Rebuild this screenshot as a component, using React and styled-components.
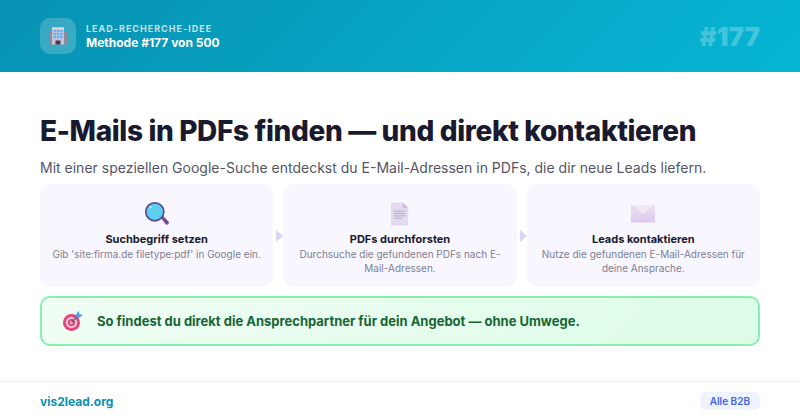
import React from 'react';
import styled, { createGlobalStyle } from 'styled-components';

const GlobalStyle = createGlobalStyle`
    html, body {
        margin: 0;
        padding: 0;
        background: #fff;
    }
    * {
        box-sizing: border-box;
    }
`;

const BuildingIcon = () => (
    <svg width="20" height="20" viewBox="0 0 20 20">
        <rect x="1" y="5" width="4" height="13.5" fill="#8d8a9c" />
        <rect x="15" y="5" width="4" height="13.5" fill="#8d8a9c" />
        <rect x="4" y="1.5" width="12" height="17" fill="#c9c3d6" />
        <rect x="4" y="1.5" width="12" height="1.5" fill="#e2deea" />
        {[4, 7, 10].map((y) => (
            <g key={y} fill="#5fb4ee">
                <rect x="5.5" y={y} width="2.4" height="2.2" />
                <rect x="8.8" y={y} width="2.4" height="2.2" />
                <rect x="12.1" y={y} width="2.4" height="2.2" />
            </g>
        ))}
        <rect x="7.5" y="14.5" width="5" height="4" fill="#3f3a52" />
    </svg>
);

const SearchIcon = () => (
    <svg width="26" height="26" viewBox="0 0 26 26">
        <path d="M16.5 16.5l2-2 6 6a1.6 1.6 0 0 1 0 2.2l-.6.6a1.6 1.6 0 0 1-2.2 0z" fill="#7c4a8c" />
        <circle cx="10.8" cy="10.8" r="9" fill="#5ccfee" stroke="#5a4a96" strokeWidth="1.7" />
        <circle cx="6.8" cy="6.2" r="1.2" fill="#a8e8f8" />
    </svg>
);

const DocumentIcon = () => (
    <svg width="19" height="24" viewBox="0 0 20 25">
        <path d="M1 .5h12.5L19 6v18.5H1z" fill="#e3daf0" />
        <path d="M13.5.5L19 6h-5.5z" fill="#c8bcd8" />
        <g stroke="#b5abc4" strokeWidth="1">
            <path d="M4 9.5h12" />
            <path d="M4 12h12" />
            <path d="M4 14.5h12" />
            <path d="M4 17h9" />
        </g>
    </svg>
);

const MailIcon = () => (
    <svg width="26" height="20" viewBox="0 0 26 20">
        <defs>
            <linearGradient id="mailBody" x1="0" y1="0" x2="0" y2="1">
                <stop offset="0" stopColor="#ebe2f2" />
                <stop offset="1" stopColor="#dcc8ef" />
            </linearGradient>
        </defs>
        <rect x="1" y="1.5" width="24" height="17" fill="url(#mailBody)" />
        <path d="M1 1.5L13 10.5 25 1.5" fill="#f0e8f5" stroke="#d9cbe6" strokeWidth=".6" />
        <path d="M1 18.5L10 8.5M25 18.5L16 8.5" stroke="#e6daf0" strokeWidth=".7" fill="none" />
    </svg>
);

const TargetIcon = () => (
    <svg width="22" height="22" viewBox="0 0 22 22">
        <circle cx="9.5" cy="12.5" r="8.5" fill="#e5417a" />
        <circle cx="9.5" cy="12.5" r="5.8" fill="#f0c5d2" />
        <circle cx="9.5" cy="12.5" r="3.6" fill="#e5417a" />
        <circle cx="9.5" cy="12.5" r="1.5" fill="#f4dde5" />
        <path d="M9.5 12.5L17 5" stroke="#4d6478" strokeWidth="1.2" />
        <path d="M14 4.5L16.5.8l1 3.2 3.4.9-3.6 2.8-3.3-.4z" fill="#4fa3e3" />
    </svg>
);

const steps = [
    {
        icon: <SearchIcon />,
        title: 'Suchbegriff setzen',
        text: "Gib 'site:firma.de filetype:pdf' in Google ein.",
    },
    {
        icon: <DocumentIcon />,
        title: 'PDFs durchforsten',
        text: 'Durchsuche die gefundenen PDFs nach E-Mail-Adressen.',
    },
    {
        icon: <MailIcon />,
        title: 'Leads kontaktieren',
        text: 'Nutze die gefundenen E-Mail-Adressen für deine Ansprache.',
    },
];

const App = () => (
    <Page>
        <GlobalStyle />
        <Header>
            <Brand>
                <IconBox>
                    <BuildingIcon />
                </IconBox>
                <div>
                    <Eyebrow>Lead-Recherche-Idee</Eyebrow>
                    <Method>Methode #177 von 500</Method>
                </div>
            </Brand>
            <Number>#177</Number>
        </Header>
        <Main>
            <Title>E-Mails in PDFs finden — und direkt kontaktieren</Title>
            <Subtitle>
                Mit einer speziellen Google-Suche entdeckst du E-Mail-Adressen in PDFs, die dir neue Leads liefern.
            </Subtitle>
            <Steps>
                {steps.map((step) => (
                    <Step key={step.title}>
                        <StepIcon>{step.icon}</StepIcon>
                        <StepTitle>{step.title}</StepTitle>
                        <StepText>{step.text}</StepText>
                    </Step>
                ))}
            </Steps>
            <Callout>
                <TargetIcon />
                <CalloutText>So findest du direkt die Ansprechpartner für dein Angebot — ohne Umwege.</CalloutText>
            </Callout>
        </Main>
        <Footer>
            <Domain>vis2lead.org</Domain>
            <Badge>Alle B2B</Badge>
        </Footer>
    </Page>
);

export default App;

const Page = styled.div`
    width: 800px;
    height: 420px;
    display: flex;
    flex-direction: column;
    overflow: hidden;
    background: #fff;
    font-family: Inter, "Liberation Sans", sans-serif;
`;

const Header = styled.header`
    height: 72px;
    flex: none;
    padding: 0 40px;
    display: flex;
    align-items: center;
    justify-content: space-between;
    background: linear-gradient(135deg, #0891b2, #06b6d4);
`;

const Brand = styled.div`
    display: flex;
    align-items: center;
    gap: 10px;
`;

const IconBox = styled.div`
    width: 36px;
    height: 36px;
    border-radius: 10px;
    display: flex;
    align-items: center;
    justify-content: center;
    background: rgba(255, 255, 255, 0.2);
`;

const Eyebrow = styled.div`
    font-size: 9px;
    line-height: 12px;
    font-weight: 700;
    letter-spacing: 1px;
    text-transform: uppercase;
    color: rgba(255, 255, 255, 0.75);
`;

const Method = styled.div`
    font-size: 12px;
    line-height: 15px;
    font-weight: 700;
    color: #fff;
`;

const Number = styled.div`
    font-size: 26px;
    font-weight: 900;
    color: rgba(255, 255, 255, 0.25);
`;

const Main = styled.main`
    flex: 1;
    padding: 41px 40px 0;
`;

const Title = styled.h1`
    margin: 0;
    font-size: 28px;
    line-height: 36px;
    font-weight: 800;
    letter-spacing: -0.35px;
    color: #1a1a2e;
`;

const Subtitle = styled.p`
    margin: 8px 0 0;
    font-size: 14px;
    line-height: 22px;
    color: #555566;
`;

const Steps = styled.div`
    margin-top: 5px;
    display: grid;
    grid-template-columns: repeat(3, 1fr);
    gap: 10px;
`;

const Step = styled.div`
    position: relative;
    height: 103px;
    padding: 17px 12px 0;
    border-radius: 12px;
    background: #f8f6ff;
    text-align: center;

    &:not(:last-child)::after {
        content: '';
        position: absolute;
        top: 46px;
        right: -10px;
        border-style: solid;
        border-width: 6px 0 6px 7px;
        border-color: transparent transparent transparent #d9d4f5;
    }
`;

const StepIcon = styled.div`
    height: 26px;
    display: flex;
    align-items: center;
    justify-content: center;
`;

const StepTitle = styled.div`
    margin-top: 4px;
    font-size: 11px;
    line-height: 16px;
    font-weight: 700;
    color: #1a1a2e;
`;

const StepText = styled.div`
    font-size: 10px;
    line-height: 14px;
    color: #808092;
`;

const Callout = styled.div`
    margin-top: 9px;
    height: 50px;
    padding: 0 20px;
    display: flex;
    align-items: center;
    gap: 13px;
    border: 2px solid #86efac;
    border-radius: 10px;
    background: linear-gradient(135deg, #f0fdf4, #dcfce7);
`;

const CalloutText = styled.div`
    font-size: 13px;
    font-weight: 700;
    color: #166534;
`;

const Footer = styled.footer`
    height: 39px;
    flex: none;
    padding: 0 40px;
    display: flex;
    align-items: center;
    justify-content: space-between;
    border-top: 1px solid #f0f0f5;
`;

const Domain = styled.div`
    font-size: 12px;
    font-weight: 700;
    color: #0891b2;
`;

const Badge = styled.div`
    padding: 3px 10px;
    border-radius: 6px;
    font-size: 10px;
    line-height: 12px;
    font-weight: 600;
    color: #4263eb;
    background: #eef3ff;
`;
